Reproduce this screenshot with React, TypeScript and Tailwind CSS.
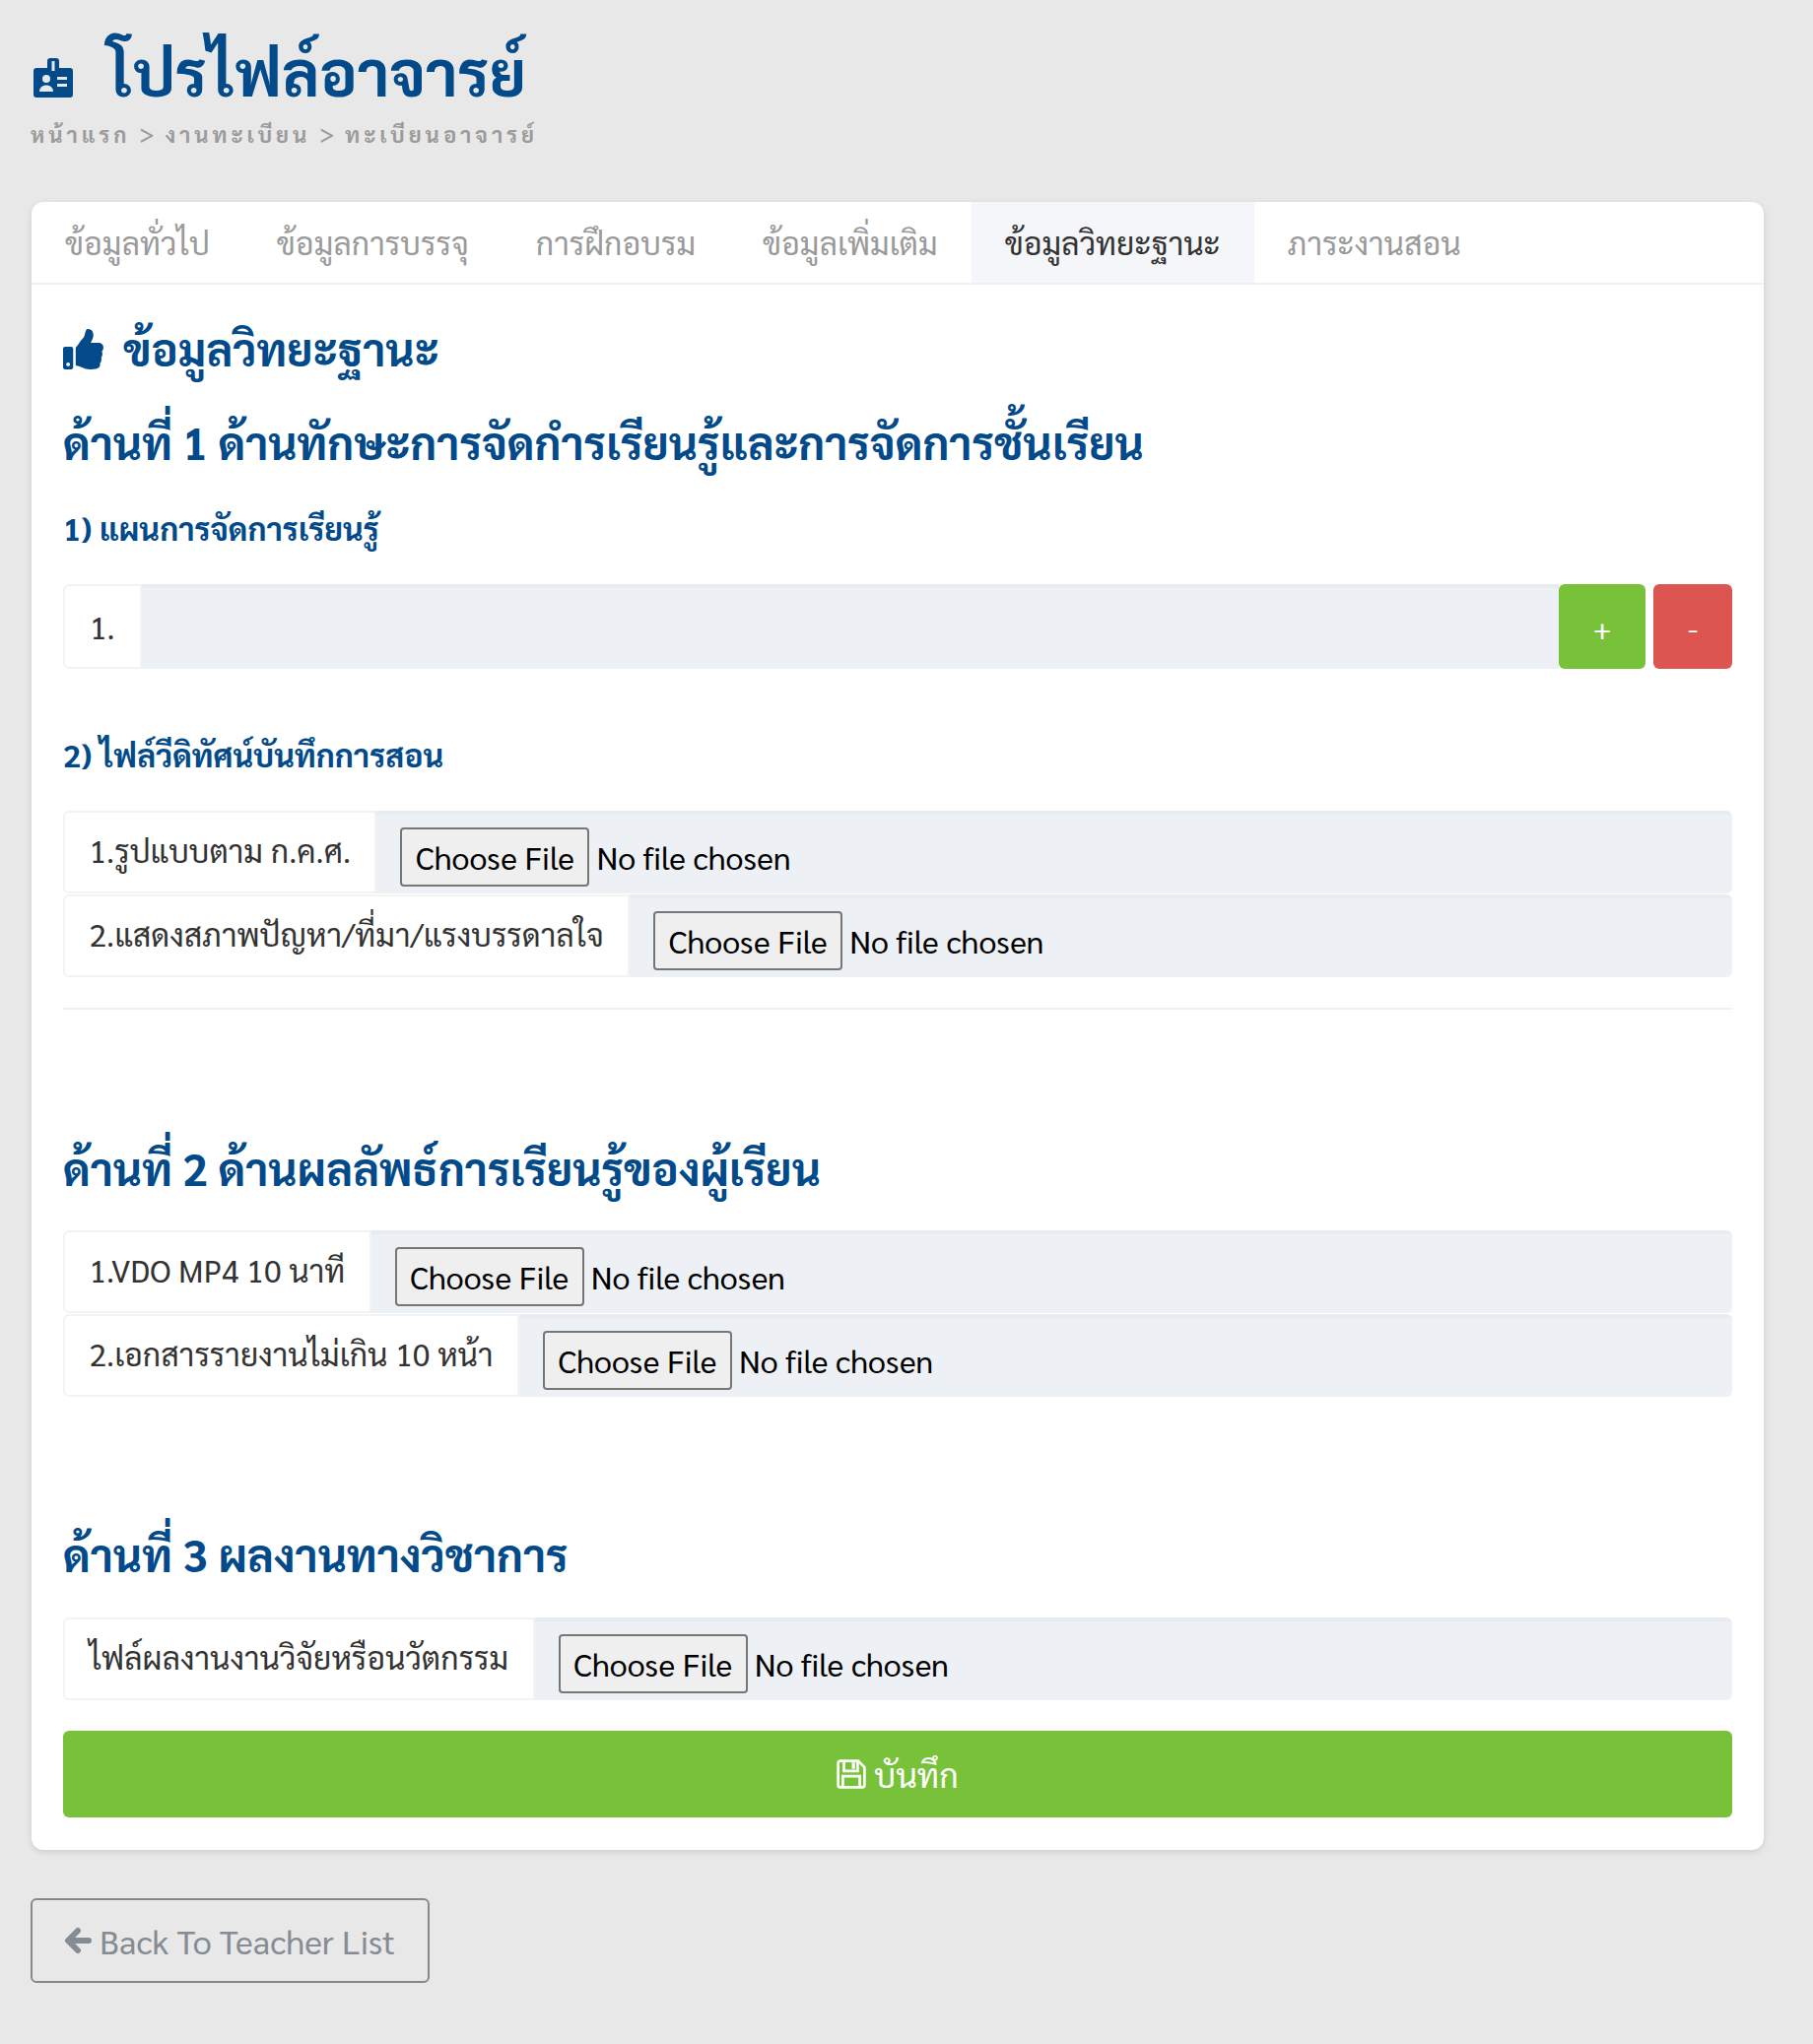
import React from "react";
import { FaThumbsUp } from "react-icons/fa";

const tabs = ["ข้อมูลทั่วไป", "ข้อมูลการบรรจุ", "การฝึกอบรม", "ข้อมูลเพิ่มเติม", "ข้อมูลวิทยะฐานะ", "ภาระงานสอน"];

const FileRow = ({ label }: { label: string }) => (
  <div className="flex h-[84px]">
    <span className="flex items-center px-[24.5px] pb-1 bg-white border-2 border-[#f1f3f5] rounded-l-md text-[32px] text-[#333] whitespace-nowrap">
      {label}
    </span>
    <div className="flex-1 flex items-center pl-[24px] pt-[6px] bg-[#edf1f5] border-t-4 border-[#e9ecef] rounded-r-md">
      <input
        type="file"
        className="text-[32px] leading-none text-black file:h-[60px] file:px-[13.5px] file:mr-[7px] file:bg-[#efefef] file:border-2 file:border-[#767676] file:rounded-[4px] file:text-black"
      />
    </div>
  </div>
);

const BadgeIcon = () => (
  <svg viewBox="0 0 40 40" className="w-[40px] h-[40px] mt-[14px] ml-[2px] shrink-0">
    <path fill="#034a8a" d="M3 10h11V3a3 3 0 0 1 3-3h6a3 3 0 0 1 3 3v7h11a3 3 0 0 1 3 3v24a3 3 0 0 1-3 3H3a3 3 0 0 1-3-3V13a3 3 0 0 1 3-3z" />
    <rect x="18.5" y="3" width="3" height="10" fill="#e8e8e8" />
    <circle cx="13" cy="21" r="4" fill="#e8e8e8" />
    <path fill="#e8e8e8" d="M6 34c0-4 3-6.500 7-6.500s7 2.500 7 6.500z" />
    <rect x="24" y="19" width="10" height="3" fill="#e8e8e8" />
    <rect x="24" y="26" width="10" height="3" fill="#e8e8e8" />
  </svg>
);

const SaveIcon = () => (
  <svg viewBox="0 0 28 28" className="w-[30px] h-[30px] shrink-0" fill="none" stroke="white" strokeWidth="2.5">
    <path d="M3.500 1.500h17l6 6v17a2 2 0 0 1-2 2h-21a2 2 0 0 1-2-2v-21a2 2 0 0 1 2-2z" />
    <path d="M7 2v9h13V2" />
    <rect x="14.500" y="3" width="3" height="6" fill="white" stroke="none" />
    <path d="M6 26v-10h16v10" />
  </svg>
);

const BackIcon = () => (
  <svg viewBox="0 0 28 28" className="w-[28px] h-[28px] shrink-0" fill="none" stroke="#858c93" strokeWidth="6" strokeLinecap="round" strokeLinejoin="round">
    <path d="M14 4 4 14l10 10M5 14h20" />
  </svg>
);

const App = () => {
  return (
    <div className="font-['Sarabun','Noto_Sans',sans-serif] min-h-[2075px] bg-[#e8e8e8] px-[32px]">
      {/* Page title */}
      <div className="h-[205px] pt-[24px]">
        <h1 className="flex items-center gap-[35px] h-[96px] text-[64px] leading-none font-bold text-[#034a8a]">
          <BadgeIcon />
          <span>โปรไฟล์อาจารย์</span>
        </h1>
        <div className="mt-[1px] -ml-[1px] text-[22px] leading-[30px] font-bold tracking-[4px] text-[#9b9b9b]">
          หน้าแรก <span className="font-medium text-[25px] leading-none tracking-[1.5px]">&gt;</span> งานทะเบียน{" "}
          <span className="font-medium text-[25px] leading-none tracking-[1.5px]">&gt;</span> ทะเบียนอาจารย์
        </div>
      </div>

      {/* Card */}
      <div className="w-[1758px] bg-white rounded-xl shadow-[0_2px_6px_rgba(0,0,0,0.12)]">
        <div className="flex h-[84px] border-b-2 border-[#eef0f2]">
          {tabs.map((tab, i) => (
            <div
              key={tab}
              className={`flex items-center px-[34px] text-[32px] ${i === 4 ? "bg-[#f4f6f9] text-[#333]" : "text-[#9a9a9a]"}`}
            >
              {tab}
            </div>
          ))}
        </div>

        <div className="px-[32px] pt-[29px] pb-[33px]">
          <h3 className="flex items-center gap-[20px] h-[72px] text-[45.2px] font-bold text-[#034a8a]">
            <FaThumbsUp className="w-[41px] h-[41px] shrink-0" />
            ข้อมูลวิทยะฐานะ
          </h3>

          <h3 className="h-[80px] mt-[23px] text-[45.2px] leading-[70px] font-bold text-[#034a8a]">
            ด้านที่ 1 ด้านทักษะการจัดกำรเรียนรู้และการจัดการชั้นเรียน
          </h3>
          <h4 className="mt-[19px] h-[64px] text-[32px] font-bold text-[#034a8a]">1) แผนการจัดการเรียนรู้</h4>

          <div className="flex h-[86px] mt-[17px]">
            <span className="flex items-center px-[25px] bg-white border-2 border-[#f1f3f5] rounded-l-md text-[32px] text-[#333]">
              1.
            </span>
            <div className="flex-1 bg-[#edf1f5] border-t-4 border-[#e9ecef]" />
            <button className="w-[88px] bg-[#78c23a] rounded-md text-[30px] text-white">+</button>
            <button className="w-[80px] ml-[8px] bg-[#dc5551] rounded-md text-[30px] text-white">-</button>
          </div>

          <h4 className="mt-[63px] h-[64px] text-[32px] font-bold text-[#034a8a]">2) ไฟล์วีดิทัศน์บันทึกการสอน</h4>
          <div className="mt-[17px] flex flex-col gap-[1px]">
            <FileRow label="1.รูปแบบตาม ก.ค.ศ." />
            <FileRow label="2.แสดงสภาพปัญหา/ที่มา/แรงบรรดาลใจ" />
          </div>
          <hr className="mt-[31px] border-[#eef0f2] border-t-2" />

          <h3 className="mt-[125px] h-[80px] text-[45.2px] leading-[70px] font-bold text-[#034a8a]">
            ด้านที่ 2 ด้านผลลัพธ์การเรียนรู้ของผู้เรียน
          </h3>
          <div className="mt-[19px] flex flex-col gap-[1px]">
            <FileRow label="1.VDO MP4 10 นาที" />
            <FileRow label="2.เอกสารรายงานไม่เกิน 10 หน้า" />
          </div>

          <h3 className="mt-[124px] h-[80px] text-[45.2px] leading-[70px] font-bold text-[#034a8a]">
            ด้านที่ 3 ผลงานทางวิชาการ
          </h3>
          <div className="mt-[20px]">
            <FileRow label="ไฟล์ผลงานงานวิจัยหรือนวัตกรรม" />
          </div>

          <button className="flex items-center justify-center gap-[8px] w-full h-[88px] mt-[31px] bg-[#78c23a] rounded-md text-[34px] text-white">
            <SaveIcon />
            บันทึก
          </button>
        </div>
      </div>

      {/* Back link */}
      <button className="flex items-center gap-[8px] w-[405px] h-[86px] mt-[49px] -ml-[1px] px-[32px] border-2 border-[#888] rounded-md text-[34px] text-[#858c93]">
        <BackIcon />
        Back To Teacher List
      </button>
    </div>
  );
};

export default App;
